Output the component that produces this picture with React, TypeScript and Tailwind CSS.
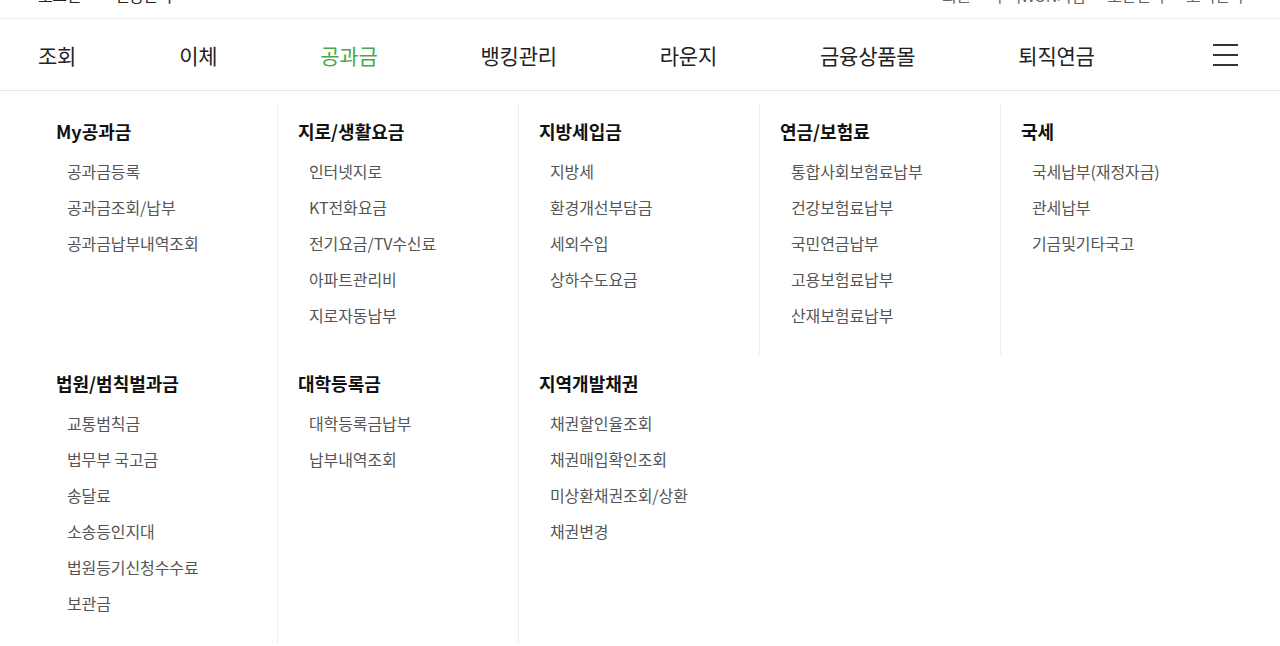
const font = { fontFamily: '"Noto Sans CJK KR", "Noto Sans", sans-serif' };

const navItems = ['조회', '이체', '공과금', '뱅킹관리', '라운지', '금융상품몰', '퇴직연금'];

type Group = { title: string; items: string[] };

const rowOne: Group[] = [
  { title: 'My공과금', items: ['공과금등록', '공과금조회/납부', '공과금납부내역조회'] },
  { title: '지로/생활요금', items: ['인터넷지로', 'KT전화요금', '전기요금/TV수신료', '아파트관리비', '지로자동납부'] },
  { title: '지방세입금', items: ['지방세', '환경개선부담금', '세외수입', '상하수도요금'] },
  { title: '연금/보험료', items: ['통합사회보험료납부', '건강보험료납부', '국민연금납부', '고용보험료납부', '산재보험료납부'] },
  { title: '국세', items: ['국세납부(재정자금)', '관세납부', '기금및기타국고'] },
];

const rowTwo: Group[] = [
  { title: '법원/범칙벌과금', items: ['교통범칙금', '법무부 국고금', '송달료', '소송등인지대', '법원등기신청수수료', '보관금'] },
  { title: '대학등록금', items: ['대학등록금납부', '납부내역조회'] },
  { title: '지역개발채권', items: ['채권할인율조회', '채권매입확인조회', '미상환채권조회/상환', '채권변경'] },
];

function Column({ group, first }: { group: Group; first: boolean }) {
  return (
    <div className={`w-[241px] pt-[17px] pb-[15px] pl-[20px] ${first ? '' : 'border-l border-[#ededed]'}`}>
      <p className="text-[18px] leading-[22px] font-bold text-[#111] tracking-[0px]">{group.title}</p>
      <ul className="mt-[18px] pl-[11px]">
        {group.items.map((item) => (
          <li key={item} className="h-[36px] leading-[22px] text-[16px] text-[#555] tracking-[-0.1px]">
            {item}
          </li>
        ))}
      </ul>
    </div>
  );
}

export default function App() {
  return (
    <div className="w-[1280px] h-[646px] overflow-hidden bg-white" style={font}>
      <div className="h-[19px] overflow-hidden flex items-end justify-between pl-[38px] pr-[37px] pb-[13px] border-b border-[#ececec]">
        <div className="flex items-center gap-[14px] text-[16px] leading-[20px] text-[#222] tracking-[-0.5px]">
          <span>로그인</span>
          <span className="text-[#aaa] text-[12px]">·</span>
          <span>인증관리</span>
        </div>
        <div className="flex items-center gap-[22px] text-[16px] leading-[20px] text-[#666] tracking-[-0.5px]">
          <span>회원</span>
          <span>우리WON기업</span>
          <span>보안센터</span>
          <span>고객센터</span>
        </div>
      </div>

      <div className="h-[72px] flex items-center justify-between pl-[38px] pr-[42px] border-b border-[#e6e6e6]">
        <nav className="flex items-center gap-[103px]">
          {navItems.map((n) => (
            <span
              key={n}
              className={`text-[21px] leading-[28px] tracking-[-0.25px] ${n === '공과금' ? 'text-[#4aa84a]' : 'text-[#222]'}`}
            >
              {n}
            </span>
          ))}
        </nav>
        <div className="flex flex-col gap-[8px] w-[25px]">
          <span className="h-[2px] bg-[#333]" />
          <span className="h-[2px] bg-[#333]" />
          <span className="h-[2px] bg-[#333]" />
        </div>
      </div>

      <div className="pl-[36px] pt-[12px]">
        <div className="flex">
          {rowOne.map((g, i) => (
            <Column key={g.title} group={g} first={i === 0} />
          ))}
        </div>
        <div className="flex">
          {rowTwo.map((g, i) => (
            <Column key={g.title} group={g} first={i === 0} />
          ))}
        </div>
      </div>
    </div>
  );
}
